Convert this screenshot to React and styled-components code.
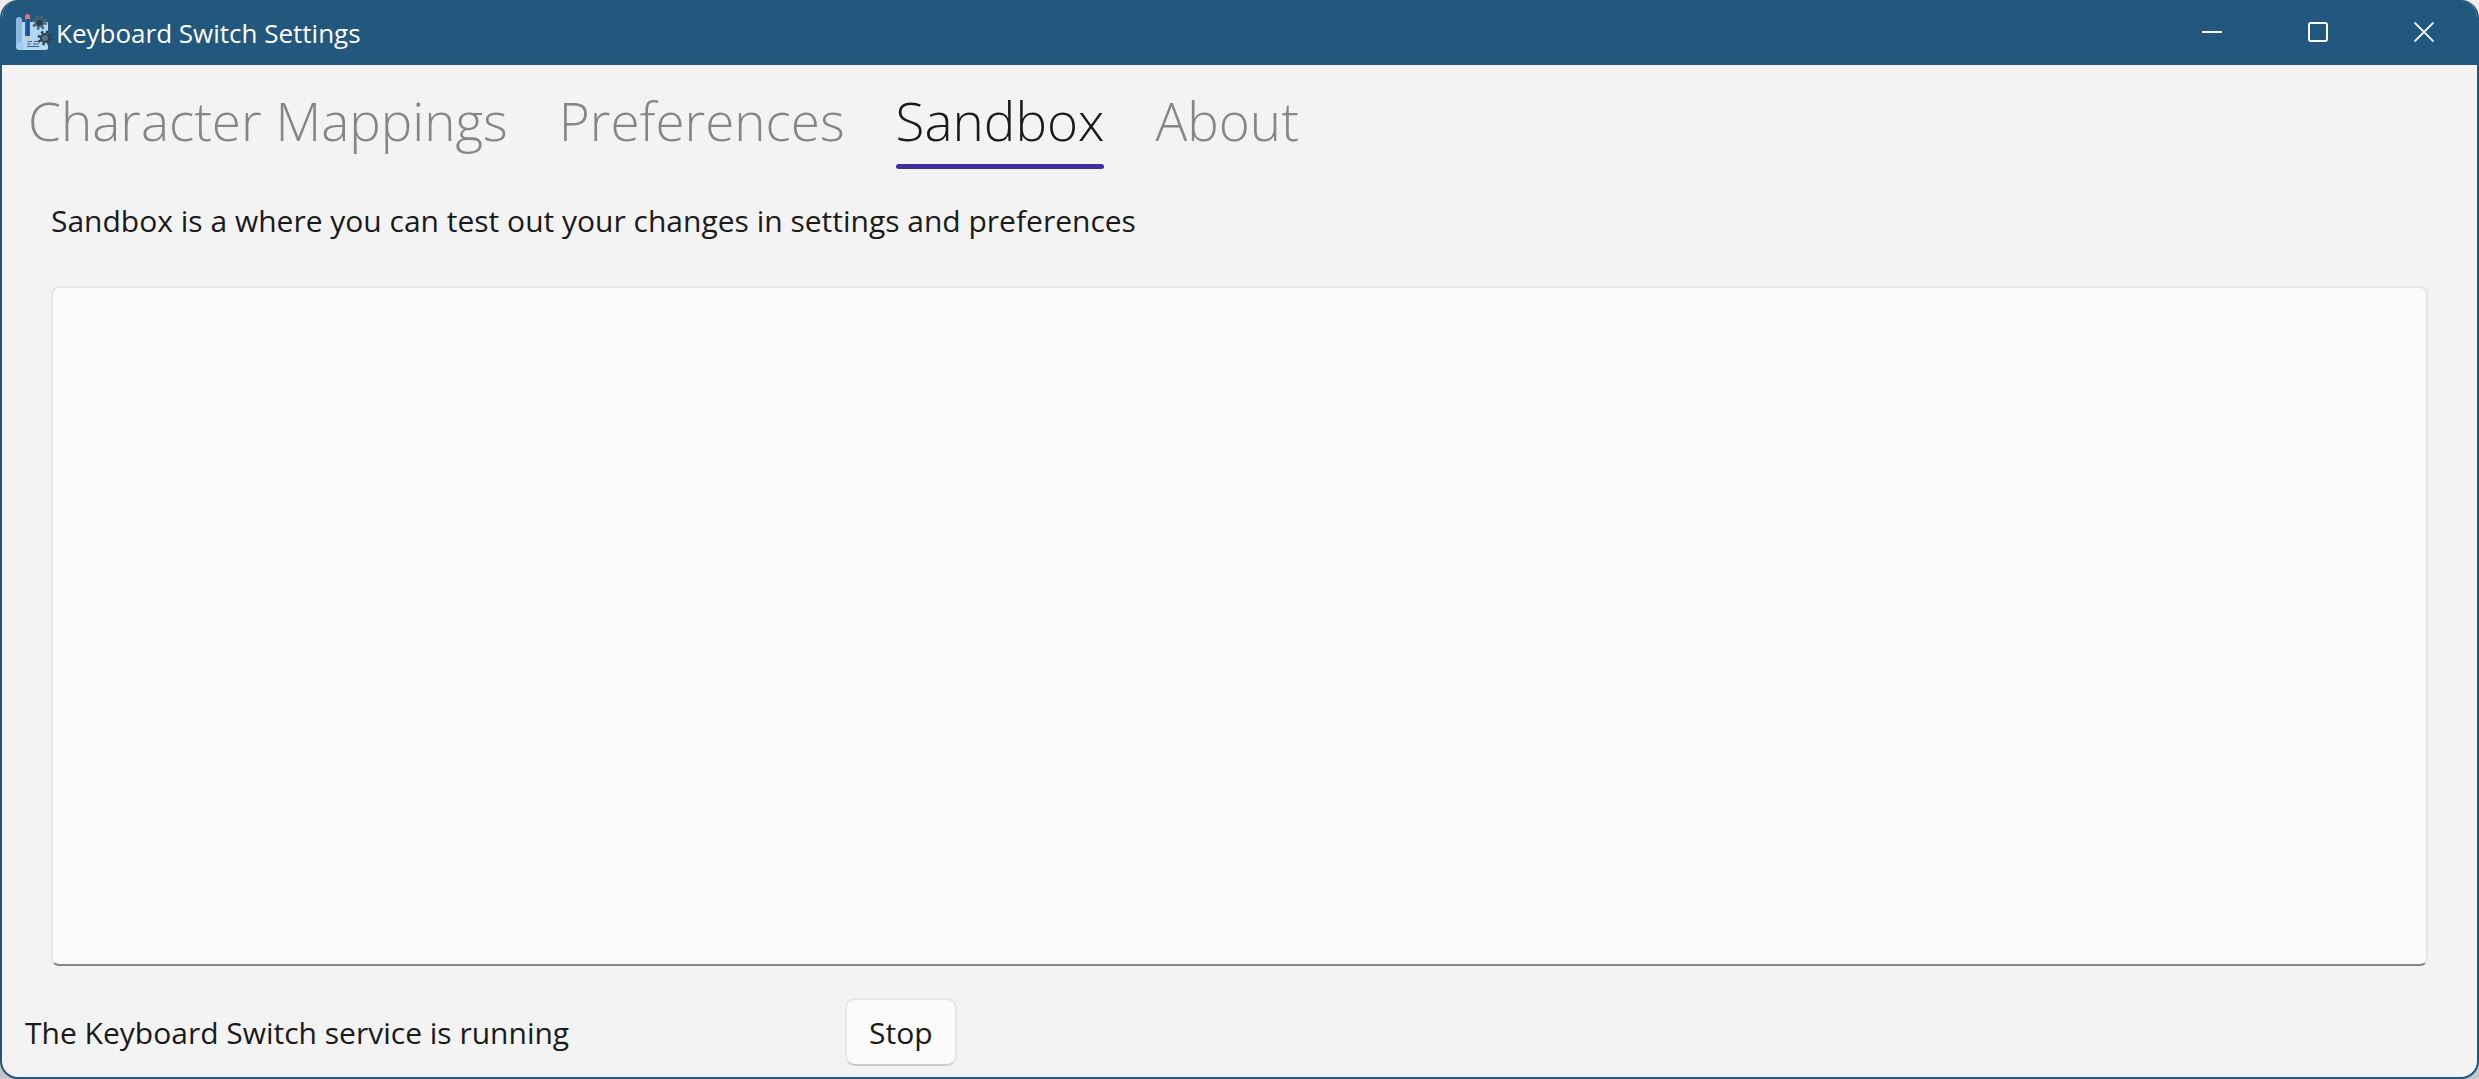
import React, { useState } from "react";
import styled, { createGlobalStyle } from "styled-components";

const accent = "#22577e";
const surface = "#f3f3f3";
const ink = "#1a1a1a";

const GlobalStyle = createGlobalStyle`
  *, *::before, *::after { box-sizing: border-box; }
  body {
    margin: 0;
    background: linear-gradient(#ececec, #c6c6c6);
    font-family: "Open Sans", "Noto Sans", sans-serif;
    color: ${ink};
  }
`;

const Window = styled.div`
  display: flex;
  flex-direction: column;
  min-height: 100vh;
  overflow: hidden;
  border: 2px solid ${accent};
  border-top: 0;
  border-radius: 18px;
  background: ${surface};
`;

const TitleBar = styled.header`
  display: flex;
  align-items: stretch;
  height: 65px;
  padding: 0 0 1px 12px;
  background: ${accent};
  color: #fff;
`;

const TitleGroup = styled.div`
  display: flex;
  flex: 1;
  align-items: center;
  gap: 2px;
`;

const Title = styled.h1`
  margin: 0;
  padding-top: 2px;
  font-size: 26px;
  font-weight: 400;
  line-height: 36px;
  white-space: nowrap;
`;

const CaptionButton = styled.button`
  display: flex;
  align-items: center;
  justify-content: center;
  width: 106px;
  padding: 0;
  border: 0;
  background: transparent;
  color: inherit;
`;

const TabStrip = styled.nav`
  display: flex;
  gap: 51px;
  padding: 17px 26px 0;
`;

const Tab = styled.button`
  padding: 0;
  border: 0;
  background: transparent;
  color: ${(p) => (p.$active ? ink : "#868686")};
  font-family: inherit;
  font-size: 53px;
  font-weight: 300;
  line-height: 78px;
  white-space: nowrap;

  &::after {
    content: "";
    display: block;
    height: 5px;
    margin-top: 4px;
    border-radius: 3px;
    background: ${(p) => (p.$active ? "#4330a0" : "transparent")};
  }
`;

const Content = styled.main`
  display: flex;
  flex: 1;
  flex-direction: column;
  gap: 44px;
  padding: 31px 49px 32px;
`;

const Description = styled.label`
  font-size: 30px;
  line-height: 42px;
`;

const SandboxInput = styled.textarea`
  flex: 1;
  width: 100%;
  padding: 12px 20px;
  border: 2px solid #e6e6e6;
  border-bottom-color: #868686;
  border-radius: 8px;
  outline: 0;
  background: #fbfbfb;
  color: inherit;
  font: inherit;
  font-size: 30px;
  resize: none;
`;

const StatusBar = styled.footer`
  display: grid;
  grid-template-columns: 820px 1fr;
  align-items: center;
  padding: 0 23px 11px;
`;

const StatusText = styled.span`
  padding-top: 2px;
  font-size: 30px;
  line-height: 42px;
`;

const ActionButton = styled.button`
  justify-self: start;
  padding: 12px 22px 10px;
  border: 2px solid #e5e5e5;
  border-bottom-color: #cccccc;
  border-radius: 10px;
  background: #fbfbfb;
  color: inherit;
  font-family: inherit;
  font-size: 30px;
  line-height: 42px;
`;

function Gear({ cx, cy, r, fill, hub }) {
  return (
    <g>
      <circle cx={cx} cy={cy} r={r} fill="none" stroke={fill} strokeWidth="3" strokeDasharray={`${(r * Math.PI) / 8} ${(r * Math.PI) / 8}`} />
      <circle cx={cx} cy={cy} r={r - 1} fill={fill} />
      <circle cx={cx} cy={cy} r={r - 3} fill={hub} />
    </g>
  );
}

function AppIcon() {
  return (
    <svg width="40" height="40" viewBox="0 0 40 40" aria-hidden="true">
      <path d="M8 10H34V36a2 2 0 0 1-2 2H6V10Z" fill="#b3d8f7" />
      <path d="M2 8a3 3 0 0 1 6 0V30a5 5 0 0 0-4 1l-2 2Z" fill="#8db8e2" />
      <path d="M2 33a4 4 0 0 1 7-2l1 7H5a3 3 0 0 1-3-3Z" fill="#a6cdf0" />
      <path d="M11 7h5v18h-5Z" fill="#2265ae" />
      <path d="M13 7h2v18h-2Z" fill="#184b8c" />
      <path d="M11 7V4.500a2.500 2.500 0 0 1 5 0V7Z" fill="#f2706c" />
      <path d="M11 24h5l-1.500 5h-2Z" fill="#d5c5bd" />
      <Gear cx={25.5} cy={10.500} r={6} fill="#45686f" hub="#263f4f" />
      <Gear cx={31} cy={26} r={6} fill="#2c4456" hub="#54777c" />
      <path d="M14 29.500h4M20 29.500h4M13 32h4M19 32h6M13 34.500h12" stroke="#405f7b" strokeWidth="1.200" />
    </svg>
  );
}

const tabs = ["Character Mappings", "Preferences", "Sandbox", "About"];

export default function App() {
  const [active, setActive] = useState("Sandbox");

  return (
    <>
      <GlobalStyle />
      <Window>
        <TitleBar>
          <TitleGroup>
            <AppIcon />
            <Title>Keyboard Switch Settings</Title>
          </TitleGroup>
          <CaptionButton type="button" aria-label="Minimize">
            <svg width="20" height="20" viewBox="0 0 20 20">
              <path d="M0 10H20" stroke="currentColor" strokeWidth="2" />
            </svg>
          </CaptionButton>
          <CaptionButton type="button" aria-label="Maximize">
            <svg width="20" height="20" viewBox="0 0 20 20">
              <rect x="1" y="1" width="18" height="18" rx="2" fill="none" stroke="currentColor" strokeWidth="2" />
            </svg>
          </CaptionButton>
          <CaptionButton type="button" aria-label="Close">
            <svg width="20" height="20" viewBox="0 0 20 20">
              <path d="M.5.5l19 19M19.500.5l-19 19" stroke="currentColor" strokeWidth="1.800" />
            </svg>
          </CaptionButton>
        </TitleBar>
        <TabStrip role="tablist">
          {tabs.map((name) => (
            <Tab
              key={name}
              type="button"
              role="tab"
              aria-selected={name === active}
              $active={name === active}
              onClick={() => setActive(name)}
            >
              {name}
            </Tab>
          ))}
        </TabStrip>
        <Content>
          <Description htmlFor="sandbox">
            Sandbox is a where you can test out your changes in settings and preferences
          </Description>
          <SandboxInput id="sandbox" />
        </Content>
        <StatusBar>
          <StatusText>The Keyboard Switch service is running</StatusText>
          <ActionButton type="button">Stop</ActionButton>
        </StatusBar>
      </Window>
    </>
  );
}
